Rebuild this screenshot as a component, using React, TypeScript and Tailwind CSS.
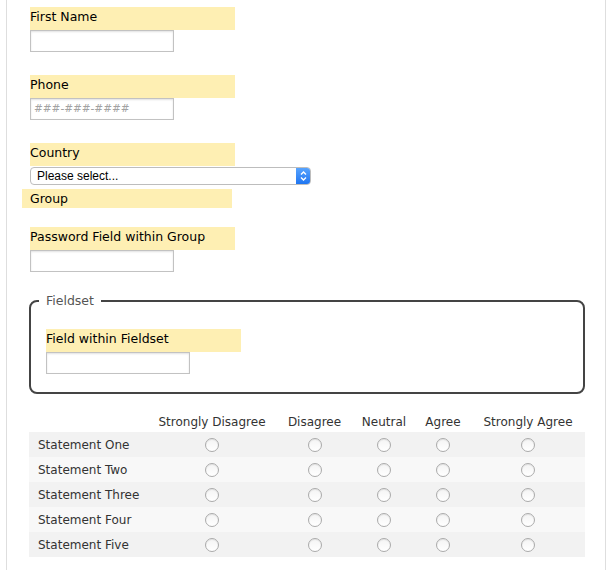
import React from "react";

const font = { fontFamily: '"DejaVu Sans", "Lucida Grande", Verdana, sans-serif' };

function Label({ children, w = "w-[205px]" }: { children: React.ReactNode; w?: string }) {
  return (
    <div className={`${w} h-[23px] bg-[#feefb3] text-[12.5px] leading-[19px] text-black`}>
      {children}
    </div>
  );
}

function TextInput({ placeholder }: { placeholder?: string }) {
  return (
    <div className="w-[144px] h-[22px] border border-[#c2c2c2] bg-white shadow-[inset_0_1px_2px_rgba(0,0,0,0.12)] flex items-center px-[3px] text-[10.5px] text-[#a2a2a2] italic">
      {placeholder}
    </div>
  );
}

function Radio() {
  return (
    <div className="w-[14px] h-[14px] rounded-full border border-[#ababab] bg-gradient-to-b from-[#f4f4f4] to-white shadow-[inset_0_1px_1px_rgba(0,0,0,0.08)]" />
  );
}

const cols = ["Strongly Disagree", "Disagree", "Neutral", "Agree", "Strongly Agree"];
const rows = ["Statement One", "Statement Two", "Statement Three", "Statement Four", "Statement Five"];

export default function App() {
  return (
    <div className="w-[616px] h-[570px] bg-white overflow-hidden" style={font}>
      <div className="ml-[6px] w-[600px] h-[570px] border-l border-r border-[#dedede] pl-[23px] pt-[7px]">
        <Label>First Name</Label>
        <TextInput />
        <div className="h-[23px]" />
        <Label>Phone</Label>
        <TextInput placeholder="###-###-####" />
        <div className="h-[23px]" />
        <Label>Country</Label>
        <div className="mt-[1px] w-[281px] h-[18px] border border-[#bdbdbd] rounded-[4px] bg-white flex items-center overflow-hidden">
          <span className="flex-1 pl-[6px] text-[12px] text-black" style={{ fontFamily: '"Liberation Sans", Arial, sans-serif' }}>
            Please select...
          </span>
          <div className="w-[15px] h-[18px] -mr-px -my-px bg-gradient-to-b from-[#5aa6ff] to-[#1a72f0] rounded-r-[4px] flex items-center justify-center">
            <svg width="9" height="12" viewBox="0 0 9 12" fill="none" stroke="white" strokeWidth="1.4">
              <path d="M2 4.5 L4.5 2 L7 4.5" />
              <path d="M2 7.5 L4.5 10 L7 7.5" />
            </svg>
          </div>
        </div>
        <div className="mt-[4px] -ml-[8px] pl-[8px] w-[210px] h-[19px] bg-[#feefb3] text-[12.5px] leading-[19px] text-black">
          Group
        </div>
        <div className="h-[19px]" />
        <Label>Password Field within Group</Label>
        <TextInput />
        <fieldset className="mt-[22px] -ml-[1px] w-[556px] border-2 border-[#444] rounded-[8px] px-[15px] pt-[21px] pb-[18px]">
          <legend className="px-[7px] -ml-[7px] text-[12.5px] leading-[14px] text-[#555]">Fieldset</legend>
          <Label w="w-[195px]">Field within Fieldset</Label>
          <TextInput />
        </fieldset>
        <div className="mt-[18px] -ml-[1px] w-[556px] text-[12px] text-[#333]">
          <div className="grid grid-cols-[119px_128px_77px_62px_56px_114px] h-[20px] items-center">
            <div />
            {cols.map((c) => (
              <div key={c} className="text-center">{c}</div>
            ))}
          </div>
          {rows.map((r, i) => (
            <div
              key={r}
              className={`grid grid-cols-[119px_128px_77px_62px_56px_114px] h-[25px] items-center ${i % 2 === 0 ? "bg-[#f2f2f2]" : "bg-[#f8f8f8]"}`}
            >
              <div className="pl-[9px]">{r}</div>
              {cols.map((c) => (
                <div key={c} className="flex justify-center">
                  <Radio />
                </div>
              ))}
            </div>
          ))}
        </div>
      </div>
    </div>
  );
}
